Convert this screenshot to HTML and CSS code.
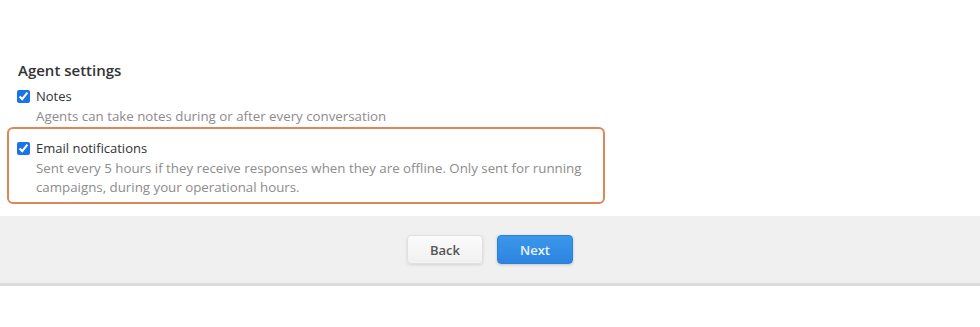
FILE: index.html
```html
<!DOCTYPE html>
<html lang="en">
<head>
    <meta charset="UTF-8">
    <title>Agent settings</title>
    <link rel="stylesheet" href="styles.css">
</head>
<body>
    <div class="settings">
        <h2>Agent settings</h2>

        <div class="option">
            <label class="option-label">
                <input type="checkbox" checked>
                <span>Notes</span>
            </label>
            <div class="option-desc">Agents can take notes during or after every conversation</div>
        </div>

        <div class="option highlight">
            <label class="option-label">
                <input type="checkbox" checked>
                <span>Email notifications</span>
            </label>
            <div class="option-desc">Sent every 5 hours if they receive responses when they are offline. Only sent for running campaigns, during your operational hours.</div>
        </div>
    </div>

    <div class="footer">
        <button class="btn btn-back">Back</button>
        <button class="btn btn-next">Next</button>
    </div>
</body>
</html>
```

FILE: styles.css
```css
body {
    font-family: "Open Sans", Arial, sans-serif;
    margin: 0;
    background: #fff;
    color: #333;
}
.settings {
    padding: 60px 0 0 9px;
    width: 596px;
}
h2 {
    font-size: 15px;
    font-weight: 600;
    line-height: 20px;
    margin: 0 0 5px 9px;
    color: #333;
}
.option {
    padding: 0 8px;
    border: 2px solid transparent;
    border-radius: 6px;
    margin-left: -2px;
}
.highlight {
    margin-top: -1px;
    border-color: #dd8758;
    padding: 10px 8px 5px;
}
.option-label {
    display: flex;
    align-items: center;
    gap: 6px;
    font-size: 13px;
    line-height: 19px;
}
.option-label input {
    margin: 0;
    width: 13px;
    height: 13px;
    accent-color: #1a73e8;
}
.option-desc {
    padding: 1px 0 0 19px;
    font-size: 13.3px;
    line-height: 19px;
    color: #8c8c8c;
}
.footer {
    margin-top: 12px;
    height: 67px;
    background: #f0f0f0;
    border-bottom: 3px solid #dcdcdc;
    display: flex;
    justify-content: center;
    align-items: center;
    gap: 14px;
}
.btn {
    width: 76px;
    height: 29px;
    border-radius: 4px;
    font-family: "Open Sans", Arial, sans-serif;
    font-size: 13px;
    font-weight: 600;
    cursor: pointer;
}
.btn-back {
    background: linear-gradient(#fbfbfb, #f1f1f1);
    border: 1px solid #e0e0e0;
    color: #555;
    box-shadow: 0 1px 3px rgba(0, 0, 0, 0.12);
}
.btn-next {
    background: linear-gradient(#3a97ea, #2d84e0);
    border: 1px solid #2a80dc;
    color: #e8f2fd;
    box-shadow: 0 1px 3px rgba(0, 0, 0, 0.18);
}
```
